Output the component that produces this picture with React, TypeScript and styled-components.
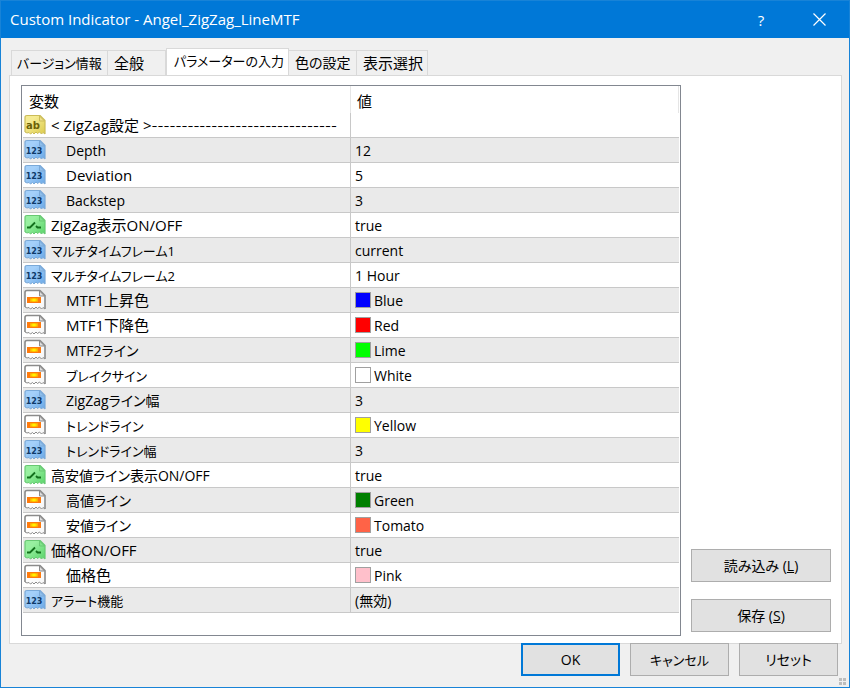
import React from 'react';
import styled, { createGlobalStyle, css } from 'styled-components';

const GlobalStyle = createGlobalStyle`
  * {
    box-sizing: border-box;
  }

  body {
    margin: 0;
    background: #f0f0f0;
    color: #000;
    font-family: 'Open Sans', 'Noto Sans CJK JP', sans-serif;
    font-size: 14px;
    line-height: 20px;
    font-feature-settings: 'palt';
  }

  button {
    font: inherit;
    font-feature-settings: inherit;
    color: inherit;
  }
`;

type TextSize = 'small' | 'medium' | 'large';

const textSizes: Record<TextSize, number> = { small: 13, medium: 14, large: 15 };

const Dialog = styled.main`
  display: flex;
  flex-direction: column;
  min-height: 100vh;
  border: 1px solid #1883d7;
  background: #f0f0f0;
`;

const TitleBar = styled.header`
  display: flex;
  align-items: stretch;
  height: 37px;
  padding: 0 1px 0 9px;
  background: #0078d7;
  color: #fff;
`;

const Title = styled.h1`
  flex: 1;
  margin: 0;
  font-size: 15px;
  font-weight: 400;
  line-height: 37px;
  white-space: nowrap;
`;

const TitleButton = styled.button`
  display: flex;
  align-items: center;
  justify-content: center;
  width: 58px;
  padding: 0;
  border: 0;
  background: transparent;
  color: #fff;
  font-size: 15px;
`;

const Content = styled.div`
  display: flex;
  flex: 1;
  flex-direction: column;
  padding: 10px 7px 0 8px;
`;

const TabList = styled.div`
  display: grid;
  grid-template-columns: 97px 58px 123px 68px 71px;
  align-items: end;
  margin: 0 0 -1px 2px;
`;

const Tab = styled.button<{ $size: TextSize; $selected?: boolean }>`
  height: 26px;
  padding: 0 6px;
  border: 1px solid #d9d9d9;
  border-left-width: 0;
  background: #f0f0f0;
  font-size: ${({ $size }) => textSizes[$size]}px;
  text-align: left;
  white-space: nowrap;

  &:first-child {
    padding-left: 5px;
    border-left-width: 1px;
  }

  ${({ $selected }) =>
    $selected &&
    css`
      height: 28px;
      padding: 0 7px 2px;
      border-left-width: 1px;
      border-bottom-color: #fff;
      background: #fff;
    `}
`;

const Panel = styled.section`
  display: flex;
  flex: 1;
  gap: 10px;
  padding: 9px 10px 7px 11px;
  border: 1px solid #d9d9d9;
  background: #fff;
`;

const ListFrame = styled.div`
  flex: 1;
  min-width: 0;
  padding: 0 1px 21px;
  border: 1px solid #828790;
`;

const Table = styled.table`
  width: 100%;
  border-collapse: separate;
  border-spacing: 0;
  table-layout: fixed;
`;

const HeaderCell = styled.th`
  height: 27px;
  padding: 2px 6px 0;
  border-right: 1px solid #e5e5e5;
  font-size: 15px;
  font-weight: 400;
  text-align: left;
`;

const Row = styled.tr`
  &:nth-child(even) {
    background: #eaeaea;
  }
`;

const Cell = styled.td`
  height: 25px;
  padding: 0 4px;
  border-bottom: 1px solid #c8c8c8;
  white-space: nowrap;
`;

const NameCell = styled(Cell)`
  padding: 0 0 0 1px;
  border-right: 1px solid #c8c8c8;
`;

const CellLine = styled.div<{ $gap: number }>`
  display: flex;
  align-items: center;
  gap: ${({ $gap }) => $gap}px;
  height: 24px;
`;

const Name = styled.span<{ $size: TextSize; $indent?: boolean }>`
  padding-top: ${({ $size }) => ($size === 'large' ? 0 : 2)}px;
  padding-left: ${({ $indent }) => ($indent ? 15 : 0)}px;
  font-size: ${({ $size }) => textSizes[$size]}px;
`;

const Value = styled.span`
  padding-top: 2px;
`;

const Dashes = styled.span`
  font-family: Inter, sans-serif;
  font-size: 13px;
`;

const Swatch = styled.span<{ $color: string }>`
  width: 16px;
  height: 16px;
  border: 1px solid #a0a0a0;
  background: ${({ $color }) => $color};
`;

const SideActions = styled.div`
  display: flex;
  flex-direction: column;
  justify-content: flex-end;
  gap: 17px;
  width: 140px;
  padding-bottom: 4px;
`;

const PushButton = styled.button<{ $primary?: boolean; $size?: TextSize }>`
  height: 33px;
  padding: 0 8px;
  border: ${({ $primary }) => ($primary ? '2px solid #0078d7' : '1px solid #adadad')};
  background: #e1e1e1;
  font-size: ${({ $size = 'medium' }) => textSizes[$size]}px;
`;

const FooterArea = styled.div`
  position: relative;
  margin-right: -7px;
  padding-right: 7px;
`;

const Footer = styled.footer`
  display: grid;
  grid-template-columns: repeat(3, 99px);
  justify-content: end;
  gap: 10px;
  margin-top: -1px;
  padding: 0 4px 11px 0;
`;

const Grip = styled.svg`
  position: absolute;
  right: 3px;
  bottom: 2px;
`;

const Definitions = styled.svg`
  position: absolute;
  top: 0;
  left: 0;
`;

type Kind = 'string' | 'number' | 'bool' | 'color';

const tones: Record<Kind, { light: string; dark: string; edge: string; fold: string }> = {
  string: { light: '#f5eb92', dark: '#dccb4c', edge: '#cbbc58', fold: '#eee08a' },
  number: { light: '#a4d0fa', dark: '#6aa8e6', edge: '#7aa9d8', fold: '#8fbfec' },
  bool: { light: '#98f0a0', dark: '#5ad46a', edge: '#68c873', fold: '#80e48a' },
  color: { light: '#ffffff', dark: '#f6f6f6', edge: '#8a8a8a', fold: '#dedede' },
};

function IconGradients() {
  return (
    <Definitions width="0" height="0" aria-hidden="true">
      <defs>
        {(Object.keys(tones) as Kind[]).map((kind) => (
          <linearGradient key={kind} id={`paper-${kind}`} x1="0" y1="0" x2="1" y2="1">
            <stop offset="0.3" stopColor={tones[kind].light} />
            <stop offset="1" stopColor={tones[kind].dark} />
          </linearGradient>
        ))}
        <radialGradient id="glow">
          <stop offset="0.3" stopColor="#fff200" />
          <stop offset="1" stopColor="#ffa800" />
        </radialGradient>
      </defs>
    </Definitions>
  );
}

function TypeIcon({ kind }: { kind: Kind }) {
  const tone = tones[kind];
  return (
    <svg width="22" height="22" viewBox="0 0 22 22" aria-hidden="true">
      <path
        d="M3 1.5H16L21 6.5V20L19 18.5L17.5 20L15.5 18L13.5 19.5L12 18L10 20L8.5 18.5L6.5 20L5 18.5L3 19L1 18V3.5Q1 1.5 3 1.5Z"
        fill={`url(#paper-${kind})`}
      />
      <path
        d="M1 18V3.5Q1 1.5 3 1.5H16L21 6.5V20"
        fill="none"
        stroke={tone.edge}
        strokeWidth={kind === 'color' ? 1.6 : 1.2}
        strokeLinejoin="round"
      />
      <path
        d="M1 18L3 19L5 18.5L6.5 20L8.5 18.5L10 20L12 18L13.5 19.5L15.5 18L17.5 20L19 18.5L21 20"
        fill="none"
        stroke={tone.edge}
        strokeLinejoin="round"
      />
      <path d="M15.5 2V7H20.5Z" fill={tone.fold} stroke={tone.edge} strokeLinejoin="round" />
      {kind === 'number' && (
        <text x="10" y="15" textAnchor="middle" fontFamily="DejaVu Sans" fontWeight="700" fontSize="8" fill="#0f3a68">
          123
        </text>
      )}
      {kind === 'string' && (
        <text x="9" y="15" textAnchor="middle" fontFamily="DejaVu Sans" fontWeight="700" fontSize="10" fill="#6b6008">
          ab
        </text>
      )}
      {kind === 'bool' && (
        <path d="M3 13.5H6L11 8.5M12 12L13.5 13.5H17" fill="none" stroke="#12701c" strokeWidth="1.8" />
      )}
      {kind === 'color' && (
        <>
          <rect x="3" y="8" width="14" height="6" fill="#ff7a0c" />
          <rect x="6" y="9" width="8" height="4" fill="url(#glow)" />
        </>
      )}
    </svg>
  );
}

interface Parameter {
  kind: Kind;
  name: string;
  value: string;
  indent?: boolean;
  size?: TextSize;
  dashes?: string;
}

const parameters: Parameter[] = [
  {
    kind: 'string',
    name: '< ZigZag設定 >',
    dashes: '-------------------------------',
    value: '',
    size: 'large',
  },
  { kind: 'number', name: 'Depth', value: '12', indent: true },
  { kind: 'number', name: 'Deviation', value: '5', indent: true, size: 'large' },
  { kind: 'number', name: 'Backstep', value: '3', indent: true },
  { kind: 'bool', name: 'ZigZag表示ON/OFF', value: 'true', size: 'large' },
  { kind: 'number', name: 'マルチタイムフレーム1', value: 'current', size: 'small' },
  { kind: 'number', name: 'マルチタイムフレーム2', value: '1 Hour', size: 'small' },
  { kind: 'color', name: 'MTF1上昇色', value: 'Blue', indent: true, size: 'large' },
  { kind: 'color', name: 'MTF1下降色', value: 'Red', indent: true, size: 'large' },
  { kind: 'color', name: 'MTF2ライン', value: 'Lime', indent: true },
  { kind: 'color', name: 'ブレイクサイン', value: 'White', indent: true, size: 'small' },
  { kind: 'number', name: 'ZigZagライン幅', value: '3', indent: true },
  { kind: 'color', name: 'トレンドライン', value: 'Yellow', indent: true, size: 'small' },
  { kind: 'number', name: 'トレンドライン幅', value: '3', indent: true, size: 'small' },
  { kind: 'bool', name: '高安値ライン表示ON/OFF', value: 'true' },
  { kind: 'color', name: '高値ライン', value: 'Green', indent: true },
  { kind: 'color', name: '安値ライン', value: 'Tomato', indent: true },
  { kind: 'bool', name: '価格ON/OFF', value: 'true', size: 'large' },
  { kind: 'color', name: '価格色', value: 'Pink', indent: true, size: 'large' },
  { kind: 'number', name: 'アラート機能', value: '(無効)', size: 'small' },
];

const tabs: { label: string; size: TextSize }[] = [
  { label: 'バージョン情報', size: 'small' },
  { label: '全般', size: 'large' },
  { label: 'パラメーターの入力', size: 'small' },
  { label: '色の設定', size: 'medium' },
  { label: '表示選択', size: 'large' },
];
const selectedTab = 2;

export default function App() {
  return (
    <>
      <GlobalStyle />
      <IconGradients />
      <Dialog>
        <TitleBar>
          <Title>Custom Indicator - Angel_ZigZag_LineMTF</Title>
          <TitleButton type="button">?</TitleButton>
          <TitleButton type="button" aria-label="Close">
            <svg width="13" height="13" viewBox="0 0 13 13" stroke="#fff" strokeWidth="1.2">
              <path d="M0.5 0.5L12.5 12.5M12.5 0.5L0.5 12.5" />
            </svg>
          </TitleButton>
        </TitleBar>
        <Content>
          <TabList role="tablist">
            {tabs.map(({ label, size }, index) => (
              <Tab
                key={label}
                type="button"
                role="tab"
                aria-selected={index === selectedTab}
                $size={size}
                $selected={index === selectedTab}
              >
                {label}
              </Tab>
            ))}
          </TabList>
          <Panel role="tabpanel" aria-label={tabs[selectedTab].label}>
            <ListFrame>
              <Table>
                <thead>
                  <tr>
                    <HeaderCell scope="col">変数</HeaderCell>
                    <HeaderCell scope="col">値</HeaderCell>
                  </tr>
                </thead>
                <tbody>
                  {parameters.map(({ kind, name, value, indent, dashes, size = 'medium' }) => (
                    <Row key={name}>
                      <NameCell>
                        <CellLine $gap={5}>
                          <TypeIcon kind={kind} />
                          <Name $indent={indent} $size={size}>
                            {name}
                            {dashes && <Dashes>{dashes}</Dashes>}
                          </Name>
                        </CellLine>
                      </NameCell>
                      <Cell>
                        <CellLine $gap={3}>
                          {kind === 'color' && <Swatch $color={value.toLowerCase()} />}
                          <Value>{value}</Value>
                        </CellLine>
                      </Cell>
                    </Row>
                  ))}
                </tbody>
              </Table>
            </ListFrame>
            <SideActions>
              <PushButton type="button">
                読み込み (<u>L</u>)
              </PushButton>
              <PushButton type="button">
                保存 (<u>S</u>)
              </PushButton>
            </SideActions>
          </Panel>
          <FooterArea>
            <Footer>
              <PushButton type="button" $primary>
                OK
              </PushButton>
              <PushButton type="button" $size="small">
                キャンセル
              </PushButton>
              <PushButton type="button">リセット</PushButton>
            </Footer>
            <Grip width="7" height="7" viewBox="0 0 7 7" fill="#bdbdbd" aria-hidden="true">
              <path d="M0 0h3v3H0zM4 0h3v3H4zM0 4h3v3H0zM4 4h3v3H4z" />
            </Grip>
          </FooterArea>
        </Content>
      </Dialog>
    </>
  );
}
